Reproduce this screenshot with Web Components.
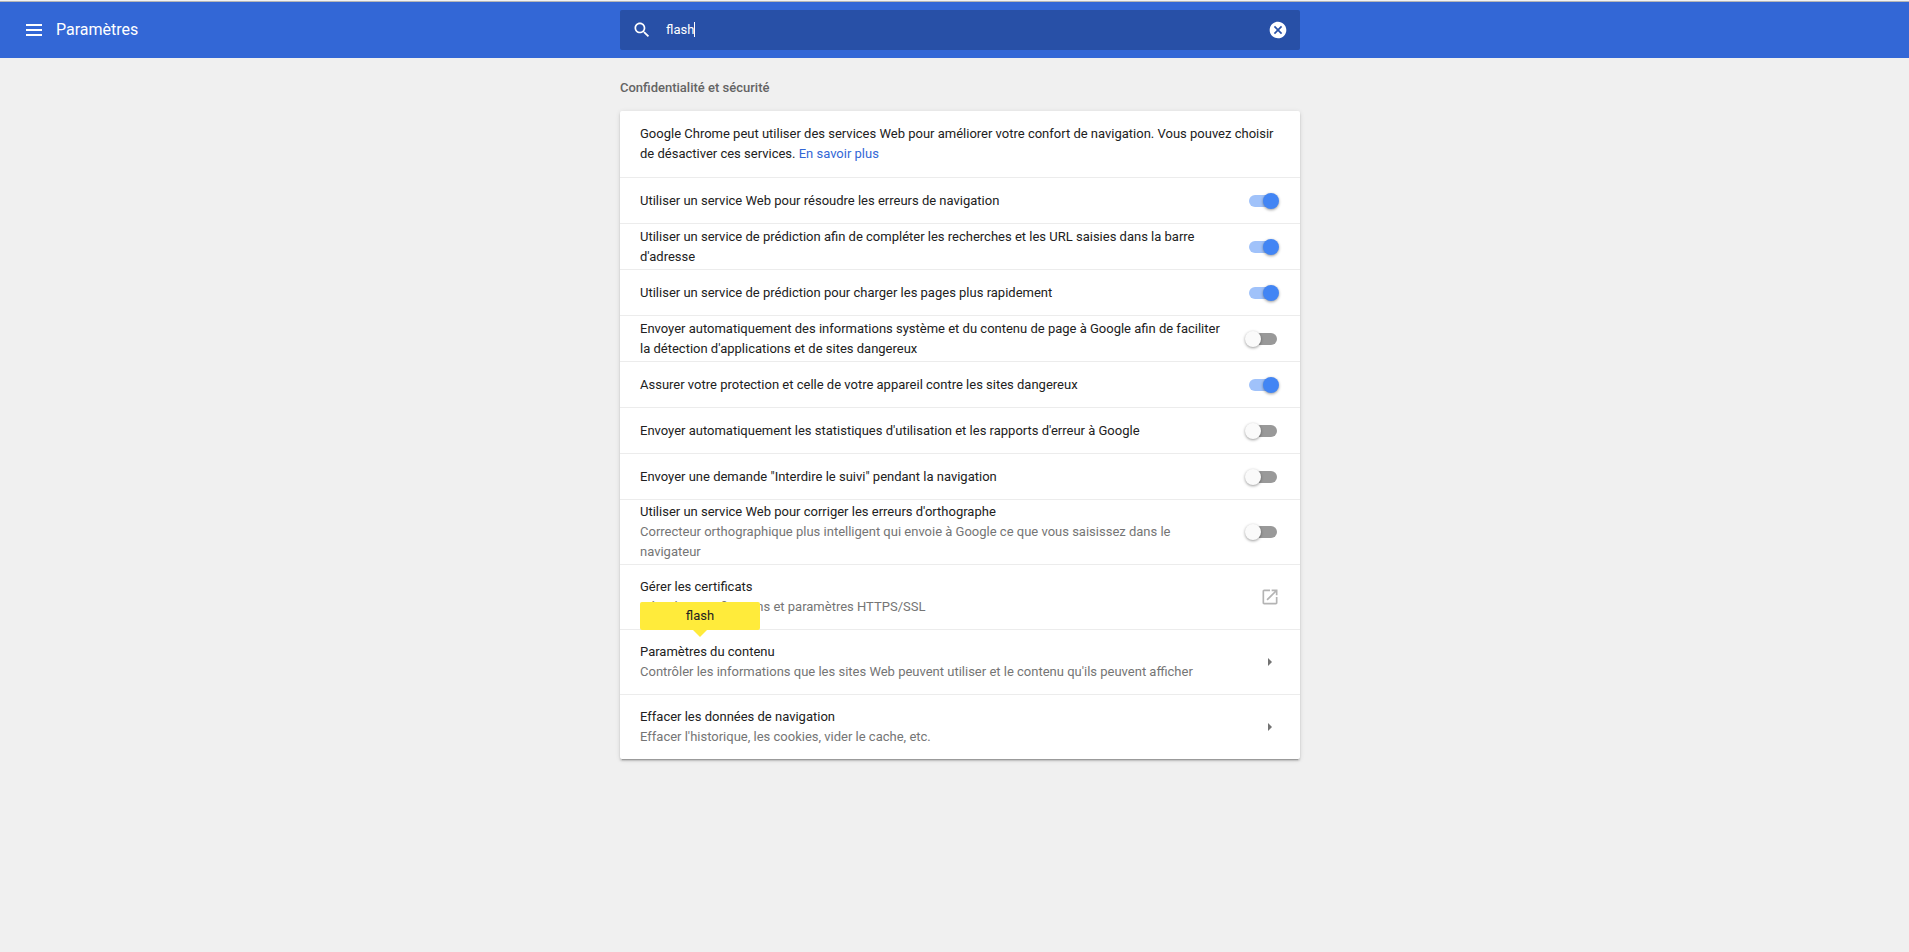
<!DOCTYPE html>
<html lang="fr">
<head>
<meta charset="utf-8">
<title>Paramètres</title>
<style>
    body {
        margin: 0;
        min-height: 100vh;
        background: #f0f0f0;
        color: #212121;
        font: 13px/20px Roboto, sans-serif;
    }
</style>
</head>
<body>
<settings-toolbar heading="Paramètres">
    <settings-search query="flash"></settings-search>
</settings-toolbar>
<settings-section heading="Confidentialité et sécurité">
    <settings-intro>Google Chrome peut utiliser des services Web pour améliorer votre confort de navigation. Vous pouvez choisir de désactiver ces services. <a slot="link" href="#">En savoir plus</a></settings-intro>
    <settings-toggle checked>Utiliser un service Web pour résoudre les erreurs de navigation</settings-toggle>
    <settings-toggle checked>Utiliser un service de prédiction afin de compléter les recherches et les URL saisies dans la barre d'adresse</settings-toggle>
    <settings-toggle checked>Utiliser un service de prédiction pour charger les pages plus rapidement</settings-toggle>
    <settings-toggle>Envoyer automatiquement des informations système et du contenu de page à Google afin de faciliter la détection d'applications et de sites dangereux</settings-toggle>
    <settings-toggle checked>Assurer votre protection et celle de votre appareil contre les sites dangereux</settings-toggle>
    <settings-toggle>Envoyer automatiquement les statistiques d'utilisation et les rapports d'erreur à Google</settings-toggle>
    <settings-toggle>Envoyer une demande "Interdire le suivi" pendant la navigation</settings-toggle>
    <settings-toggle two-line>Utiliser un service Web pour corriger les erreurs d'orthographe<span slot="sub">Correcteur orthographique plus intelligent qui envoie à Google ce que vous saisissez dans le navigateur</span></settings-toggle>
    <settings-link icon="external">Gérer les certificats<span slot="sub">Gérer les certifications et paramètres HTTPS/SSL</span></settings-link>
    <settings-link>Paramètres du contenu<span slot="sub">Contrôler les informations que les sites Web peuvent utiliser et le contenu qu'ils peuvent afficher</span><search-bubble slot="bubble">flash</search-bubble></settings-link>
    <settings-link>Effacer les données de navigation<span slot="sub">Effacer l'historique, les cookies, vider le cache, etc.</span></settings-link>
</settings-section>

<script>
class SettingsToolbar extends HTMLElement {
    constructor() {
        super();
        this.attachShadow({ mode: 'open' });
        this.shadowRoot.innerHTML = `
            <style>
                :host {
                    display: block;
                    border-top: 1px solid #f2f2f2;
                }

                header {
                    display: grid;
                    grid-template-columns: 1fr minmax(0, 680px) 1fr;
                    align-items: center;
                    height: 56px;
                    padding: 0 13px 0 24px;
                    border-top: 1px solid #b6b6b6;
                    background: #3367d6;
                    color: #fff;
                }

                .left {
                    display: flex;
                    align-items: center;
                    gap: 12px;
                }

                button {
                    display: flex;
                    padding: 2px;
                    border: none;
                    background: none;
                    color: inherit;
                    cursor: pointer;
                }

                h1 {
                    margin: 0;
                    font-size: 16px;
                    font-weight: 400;
                }
            </style>
            <header>
                <div class="left">
                    <button aria-label="Menu principal">
                        <svg width="16" height="12" fill="currentColor"><path d="M0 0h16v2H0zM0 5h16v2H0zM0 10h16v2H0z"/></svg>
                    </button>
                    <h1></h1>
                </div>
                <slot></slot>
            </header>
        `;
    }

    connectedCallback() {
        this.shadowRoot.querySelector('h1').textContent = this.getAttribute('heading');
    }
}

class SettingsSearch extends HTMLElement {
    constructor() {
        super();
        this.attachShadow({ mode: 'open' });
        this.shadowRoot.innerHTML = `
            <style>
                :host {
                    display: flex;
                    align-items: center;
                    height: 40px;
                    padding: 0 12px;
                    box-sizing: border-box;
                    border-radius: 2px;
                    background: #2850a7;
                }

                label {
                    display: flex;
                }

                .field {
                    position: relative;
                    display: flex;
                    flex: 1;
                    margin: 0 14px;
                }

                input {
                    width: 100%;
                    padding: 0;
                    border: none;
                    outline: none;
                    background: none;
                    color: #fff;
                    font: inherit;
                }

                /* text cursor, placed after an invisible run as wide as the query */
                .caret {
                    position: absolute;
                    left: 0;
                    top: 2px;
                    height: 15px;
                    border-right: 1px solid #fff;
                    pointer-events: none;
                }

                button {
                    display: flex;
                    padding: 0;
                    border: none;
                    background: none;
                    color: #fff;
                    cursor: pointer;
                }
            </style>
            <label for="search" aria-label="Rechercher">
                <svg width="20" height="20" viewBox="0 0 24 24" fill="#fff"><path d="M15.5 14h-.79l-.28-.27C15.41 12.59 16 11.11 16 9.5 16 5.91 13.09 3 9.5 3S3 5.91 3 9.5 5.91 16 9.5 16c1.61 0 3.09-.59 4.23-1.57l.27.28v.79l5 4.99L20.49 19l-4.99-5zm-6 0C7.01 14 5 11.99 5 9.5S7.01 5 9.5 5 14 7.01 14 9.5 11.99 14 9.5 14z"/></svg>
            </label>
            <div class="field">
                <input id="search" type="text">
                <span class="caret"></span>
            </div>
            <button aria-label="Effacer la recherche">
                <svg width="20" height="20" viewBox="0 0 24 24" fill="currentColor"><path d="M12 2C6.47 2 2 6.47 2 12s4.47 10 10 10 10-4.47 10-10S17.53 2 12 2zm5 13.59L15.59 17 12 13.41 8.41 17 7 15.59 10.59 12 7 8.41 8.41 7 12 10.59 15.59 7 17 8.41 13.41 12 17 15.59z"/></svg>
            </button>
        `;
    }

    connectedCallback() {
        const input = this.shadowRoot.querySelector('input');
        const caret = this.shadowRoot.querySelector('.caret');
        const place = () => {
            const pen = document.createElement('canvas').getContext('2d');
            pen.font = '13px Roboto';
            caret.style.width = Math.round(pen.measureText(input.value).width) + 'px';
        };
        input.value = this.getAttribute('query') || '';
        input.addEventListener('input', place);
        this.shadowRoot.querySelector('button').addEventListener('click', () => {
            input.value = '';
            place();
        });
        place();
    }
}

class SettingsSection extends HTMLElement {
    constructor() {
        super();
        this.attachShadow({ mode: 'open' });
        this.shadowRoot.innerHTML = `
            <style>
                :host {
                    display: grid;
                    grid-template-columns: minmax(0, 680px);
                    justify-content: center;
                    padding: 20px 0 20px 11px;
                }

                h2 {
                    margin: 0 0 13px;
                    color: #646464;
                    font-size: 13px;
                    font-weight: 500;
                }

                .card {
                    border-radius: 2px;
                    background: #fff;
                    box-shadow: 0 2px 2px rgba(0, 0, 0, 0.14), 0 1px 5px rgba(0, 0, 0, 0.12), 0 3px 1px -2px rgba(0, 0, 0, 0.2);
                }
            </style>
            <h2></h2>
            <div class="card"><slot></slot></div>
        `;
    }

    connectedCallback() {
        this.shadowRoot.querySelector('h2').textContent = this.getAttribute('heading');
    }
}

class SettingsIntro extends HTMLElement {
    constructor() {
        super();
        this.attachShadow({ mode: 'open' });
        this.shadowRoot.innerHTML = `
            <style>
                :host {
                    display: block;
                    padding: 13px 20px;
                }

                p {
                    margin: 0;
                }

                ::slotted(a) {
                    color: #3367d6;
                    text-decoration: none;
                }
            </style>
            <p><slot></slot><slot name="link"></slot></p>
        `;
    }
}

class SettingsToggle extends HTMLElement {
    constructor() {
        super();
        this.attachShadow({ mode: 'open' });
        this.shadowRoot.innerHTML = `
            <style>
                :host {
                    display: flex;
                    align-items: center;
                    min-height: 46px;
                    box-sizing: border-box;
                    padding: 0 23px 0 20px;
                    border-top: 1px solid #ececec;
                }

                :host([two-line]) {
                    min-height: 65px;
                }

                label {
                    flex: 1;
                    margin-right: 24px;
                }

                ::slotted([slot=sub]) {
                    display: block;
                    color: #757575;
                }

                input {
                    appearance: none;
                    position: relative;
                    width: 28px;
                    height: 12px;
                    margin: 0;
                    border-radius: 8px;
                    background: #999;
                    cursor: pointer;
                }

                input::before {
                    content: '';
                    position: absolute;
                    top: -2px;
                    left: -4px;
                    width: 16px;
                    height: 16px;
                    border-radius: 50%;
                    background: #fafafa;
                    box-shadow: 0 1px 3px rgba(0, 0, 0, 0.4);
                }

                input:checked {
                    background: #a0c2fa;
                }

                input:checked::before {
                    left: 14px;
                    background: #4285f4;
                }
            </style>
            <label for="control"><slot></slot><slot name="sub"></slot></label>
            <input id="control" type="checkbox">
        `;
    }

    connectedCallback() {
        this.shadowRoot.querySelector('input').checked = this.hasAttribute('checked');
    }
}

const linkIcons = {
    external: '<svg width="20" height="20" viewBox="0 0 24 24" fill="#b4b4b4"><path d="M19 19H5V5h7V3H5c-1.11 0-2 .9-2 2v14c0 1.1.89 2 2 2h14c1.1 0 2-.9 2-2v-7h-2v7zM14 3v2h3.59l-9.83 9.83 1.41 1.41L19 6.41V10h2V3h-7z"/></svg>',
    arrow: '<svg width="20" height="20" viewBox="0 0 20 20" fill="#737373"><path d="M8 6l4 4-4 4z"/></svg>'
};

class SettingsLink extends HTMLElement {
    constructor() {
        super();
        this.attachShadow({ mode: 'open' });
        this.shadowRoot.innerHTML = `
            <style>
                :host {
                    display: block;
                    position: relative;
                    border-top: 1px solid #ececec;
                }

                button {
                    display: flex;
                    align-items: center;
                    justify-content: space-between;
                    width: 100%;
                    min-height: 64px;
                    padding: 0 20px;
                    border: none;
                    background: none;
                    color: inherit;
                    font: inherit;
                    text-align: left;
                    cursor: pointer;
                }

                svg {
                    display: block;
                }

                ::slotted([slot=sub]) {
                    display: block;
                    color: #757575;
                }

                ::slotted([slot=bubble]) {
                    position: absolute;
                    bottom: 100%;
                    left: 20px;
                }
            </style>
            <button>
                <span><slot></slot><slot name="sub"></slot></span>
                <span class="icon"></span>
            </button>
            <slot name="bubble"></slot>
        `;
    }

    connectedCallback() {
        this.shadowRoot.querySelector('.icon').innerHTML = linkIcons[this.getAttribute('icon') || 'arrow'];
    }
}

class SearchBubble extends HTMLElement {
    constructor() {
        super();
        this.attachShadow({ mode: 'open' });
        this.shadowRoot.innerHTML = `
            <style>
                :host {
                    width: 120px;
                    padding: 4px 0;
                    border-radius: 2px;
                    background: #ffeb3b;
                    text-align: center;
                }

                :host::after {
                    content: '';
                    position: absolute;
                    top: 100%;
                    left: 50%;
                    margin-left: -7px;
                    border: 7px solid transparent;
                    border-top-color: #ffeb3b;
                    border-bottom: none;
                }
            </style>
            <slot></slot>
        `;
    }
}

customElements.define('settings-toolbar', SettingsToolbar);
customElements.define('settings-search', SettingsSearch);
customElements.define('settings-section', SettingsSection);
customElements.define('settings-intro', SettingsIntro);
customElements.define('settings-toggle', SettingsToggle);
customElements.define('settings-link', SettingsLink);
customElements.define('search-bubble', SearchBubble);
</script>
</body>
</html>
